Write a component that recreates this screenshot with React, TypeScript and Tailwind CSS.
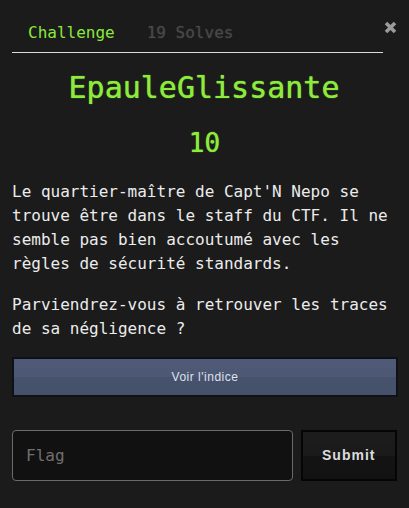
import React from "react";

export default function App() {
  const mono = { fontFamily: '"DejaVu Sans Mono", monospace' };
  return (
    <div
      className="w-[409px] h-[508px] bg-[#1b1b1b] px-[12px] pt-[21px] overflow-hidden"
      style={mono}
    >
      <div className="flex items-start">
        <div className="w-[372px] flex border-b border-[#dcdcdc] pb-[7px]">
          <div className="px-4 text-[16px] leading-[24px] text-[#8ae83d]">Challenge</div>
          <div className="px-4 text-[16px] leading-[24px] text-[#4a4a4a] [text-shadow:0_0_2px_#333333]">19 Solves</div>
        </div>
        <div className="ml-[1px] mt-[0px] w-[13px] h-[13px]">
          <svg width="13" height="13" viewBox="0 0 13 13">
            <path d="M2 2 L11 11 M11 2 L2 11" stroke="#9b9b9b" strokeWidth="3.6" strokeLinecap="butt" />
          </svg>
        </div>
      </div>

      <div className="mt-[17px] text-center text-[30px] leading-[36px] text-[#8cec3c] pr-[1px] [text-shadow:0_0_1px_#8cec3c]">
        EpauleGlissante
      </div>
      <div className="mt-[21px] text-center text-[26px] leading-[32px] text-[#8cec3c] [text-shadow:0_0_1px_#8cec3c]">10</div>

      <div className="mt-[21px] text-[16px] leading-[24px] text-[#ececec]">
        <p>Le quartier-maître de Capt'N Nepo se trouve être dans le staff du CTF. Il ne semble pas bien accoutumé avec les règles de sécurité standards.</p>
        <p className="mt-[17px]">Parviendrez-vous à retrouver les traces de sa négligence ?</p>
      </div>

      <div className="mt-[16px] w-[386px] h-[40px] border-2 border-[#0e1117] bg-[linear-gradient(#4f5a76_0%,#4d5874_50%,#46516b_50%,#46516b_100%)] flex items-center justify-center">
        <span
          className="text-[12px] tracking-[0.5px] text-[#dfe3ee]"
          style={{ fontFamily: '"Liberation Sans", Arial, sans-serif' }}
        >
          Voir l'indice
        </span>
      </div>

      <div className="mt-[33px] flex gap-[8px]">
        <div className="w-[282px] h-[51px] rounded-[4px] border border-[#6a6a6a] bg-[#111111] flex items-center pl-[13px]">
          <span className="text-[16px] text-[#707070]">Flag</span>
        </div>
        <div className="w-[97px] h-[51px] border-2 border-[#050505] bg-[linear-gradient(#1d1d1d_0%,#1a1a1a_50%,#141414_50%,#121212_100%)] flex items-center justify-center">
          <span
            className="text-[14px] font-bold tracking-[1px] text-[#dddddd]"
            style={{ fontFamily: '"Liberation Sans", Arial, sans-serif' }}
          >
            Submit
          </span>
        </div>
      </div>
    </div>
  );
}
